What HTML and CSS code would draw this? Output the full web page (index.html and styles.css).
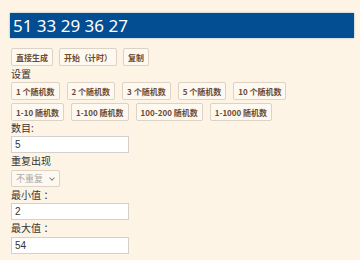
FILE: index.html
```html
<!DOCTYPE html>
<html lang="zh-CN">
<head>
    <meta charset="UTF-8">
    <title>随机数生成器</title>
    <link rel="stylesheet" href="styles.css">
</head>
<body>
    <div class="result">51 33 29 36 27</div>

    <div class="actions">
        <button class="btn">直接生成</button>
        <button class="btn">开始（计时）</button>
        <button class="btn">复制</button>
    </div>

    <div class="label">设置</div>
    <div class="presets">
        <button class="btn">1 个随机数</button>
        <button class="btn">2 个随机数</button>
        <button class="btn">3 个随机数</button>
        <button class="btn">5 个随机数</button>
        <button class="btn">10 个随机数</button>
        <button class="btn">1-10 随机数</button>
        <button class="btn">1-100 随机数</button>
        <button class="btn">100-200 随机数</button>
        <button class="btn">1-1000 随机数</button>
    </div>

    <div class="field">
        <label class="label" for="count">数目:</label>
        <input class="text-input" type="text" id="count" value="5">
    </div>
    <div class="field">
        <label class="label" for="repeat">重复出现</label>
        <div class="select-wrap">
            <select class="select" id="repeat">
                <option>不重复</option>
                <option>可重复</option>
            </select>
        </div>
    </div>
    <div class="field">
        <label class="label" for="min">最小值 ：</label>
        <input class="text-input" type="text" id="min" value="2">
    </div>
    <div class="field">
        <label class="label" for="max">最大值 ：</label>
        <input class="text-input" type="text" id="max" value="54">
    </div>
</body>
</html>
```

FILE: styles.css
```css
body {
    margin: 0;
    padding: 13px 6px 0 11px;
    background-color: #fdf4e6;
    font-family: "Noto Sans", "Noto Sans CJK SC", sans-serif;
    color: #333;
}

.result {
    margin-left: -1px;
    background-color: #034e92;
    color: #fff;
    font-size: 17px;
    line-height: 25px;
    padding: 0 3px;
    box-shadow: 0 0 2px #8fb0d0;
}

.actions {
    display: flex;
    gap: 6px;
    margin-top: 10px;
}

.btn {
    font-family: "Noto Sans CJK SC", sans-serif;
    font-size: 8px;
    font-weight: bold;
    color: #6b4a32;
    background-color: #fdf8f0;
    border: 1px solid #ddd2c4;
    border-radius: 2px;
    padding: 0 4px;
    height: 18px;
    cursor: pointer;
}

.label {
    display: block;
    font-size: 10px;
    line-height: 16px;
}

.presets {
    display: flex;
    flex-wrap: wrap;
    gap: 3px 7px;
    width: 290px;
}

.field .label {
    line-height: 16.5px;
}

.presets + .field .label {
    line-height: 15px;
}

.text-input {
    display: block;
    box-sizing: border-box;
    width: 118px;
    height: 17px;
    margin: 0;
    padding: 0 3px;
    border: 1px solid #d4d0cc;
    font-family: "Liberation Sans", sans-serif;
    font-size: 10px;
    color: #333;
}

.select-wrap {
    position: relative;
    width: fit-content;
}

.select-wrap::after {
    content: "";
    position: absolute;
    right: 6px;
    top: 6px;
    width: 3px;
    height: 3px;
    border-right: 1px solid #888;
    border-bottom: 1px solid #888;
    transform: rotate(45deg);
    pointer-events: none;
}

.select {
    display: block;
    box-sizing: border-box;
    appearance: none;
    height: 17px;
    margin: 0;
    padding: 0 15px 0 4px;
    font-family: "Noto Sans CJK SC", sans-serif;
    font-size: 9px;
    color: #aaa;
    border: 1px solid #ddd2c4;
    border-radius: 2px;
    background-color: #fdf8f0;
}
```
